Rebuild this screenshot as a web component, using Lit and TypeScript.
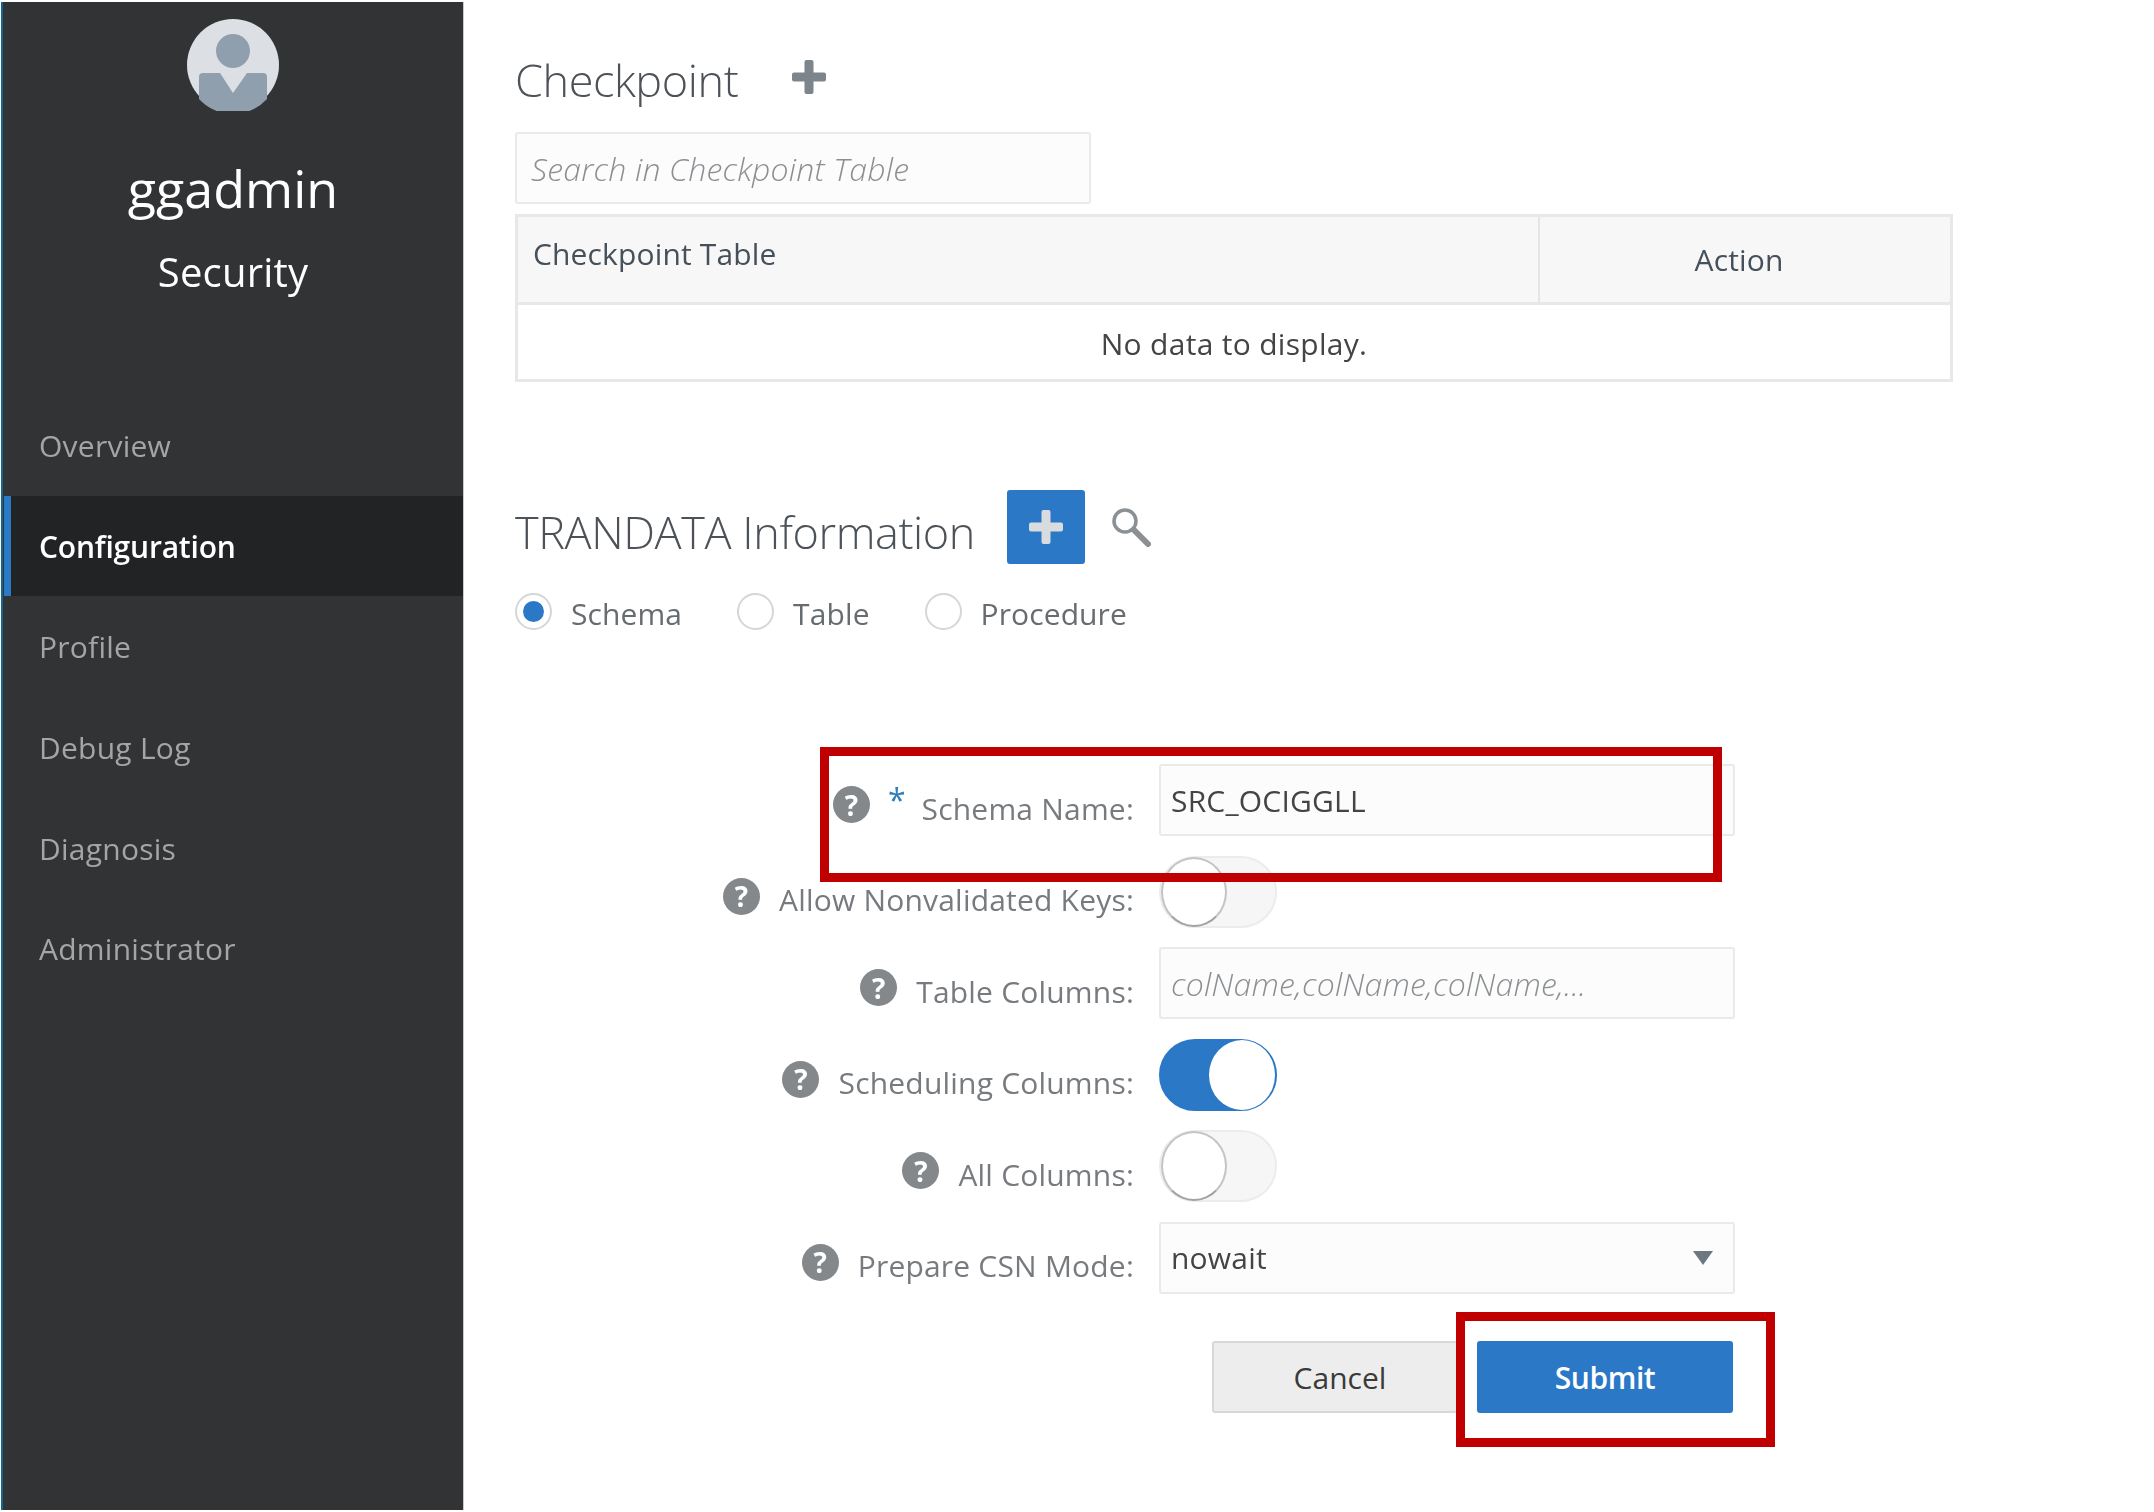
import { LitElement, html, css } from "lit";
import { customElement } from "lit/decorators.js";

const plus = html`<svg viewBox="0 0 38 38" width="38" height="38" fill="currentColor"><rect x="14.5" y="2" width="9" height="34" rx="2"/><rect x="2" y="14.5" width="34" height="9" rx="2"/></svg>`;

@customElement("app-root")
export class AppRoot extends LitElement {
  static styles = css`
    :host { display: block; width: 2154px; height: 1512px; background: #fff; font-family: "Open Sans", "Noto Sans", sans-serif; position: relative; overflow: hidden; }
    .page { display: flex; height: 1512px; filter: blur(0.5px); }
    .side { width: 460px; margin: 2px 0 2px 1px; border-left: 2px solid #12658f; border-right: 1px solid #c9cacb; background: #323335; flex: none; box-sizing: content-box; display: flex; flex-direction: column; align-items: stretch; }
    .avatar { align-self: center; margin: 17px 0 0; width: 92px; height: 92px; display: block; }
    .user { text-align: center; color: #fff; font-size: 52px; line-height: 64px; margin-top: 45px; }
    .role { text-align: center; color: #fff; font-size: 40px; line-height: 54px; margin-top: 25px; letter-spacing: 0.2px; }
    nav { margin-top: 96px; padding-left: 1px; display: flex; flex-direction: column; }
    .item { height: 100.7px; display: flex; align-items: center; padding-left: 28px; border-left: 7px solid transparent; color: #a3a5a6; font-size: 30px; letter-spacing: 0.25px; }
    .item.on { background: #222325; border-left-color: #2a7ac8; color: #fff; font-weight: 600; letter-spacing: -0.2px; }
    main { flex: 1; padding: 0 0 0 51px; min-width: 0; display: flex; flex-direction: column; align-items: flex-start; }
    .head { display: flex; align-items: center; height: 70px; margin-top: 42px; }
    h2 { margin: 6px 0 0; font-weight: 300; color: #4c5257; font-size: 45px; letter-spacing: -0.4px; line-height: 60px; }
    .plain-plus { color: #7d858c; margin-left: 52px; display: flex; }
    .input { box-sizing: border-box; border: 2px solid #e9eaea; border-radius: 3px; background: #fcfcfc; display: flex; align-items: center; color: #444; font-size: 30px; letter-spacing: 0.2px; }
    .ph { color: #8c8f92; font-style: italic; font-weight: 300; font-size: 32px; letter-spacing: 0.2px; }
    .search { width: 576px; height: 72px; margin-top: 20px; padding: 0 0 0 14px; }
    table { width: 1438px; height: 168px; margin-top: 10px; border: 3px solid #e7e9e9; border-collapse: separate; border-spacing: 0; box-sizing: border-box; table-layout: fixed; font-size: 30px; letter-spacing: 0.15px; color: #46505a; }
    th { background: #f7f7f7; font-weight: 400; height: 85px; border-bottom: 3px solid #e7e9e9; padding: 0; }
    th.a { text-align: left; vertical-align: top; height: 69px; padding: 16px 0 0 15px; border-right: 2px solid #e4e6e6; }
    th.b { width: 398px; padding-right: 12px; }
    td { text-align: center; padding: 3px 0 0; color: #444; letter-spacing: 0.3px; }
    .tran { margin-top: 108px; height: 74px; }
    .tran h2 { margin-top: 9px; }
    .add { margin-left: 32px; width: 78px; height: 74px; border-radius: 3px; background: #2a78c6; color: #d8dcdf; display: flex; align-items: center; justify-content: center; }
    .mag { margin-left: 26px; display: block; }
    .radios { display: flex; align-items: center; height: 37px; margin-top: 29px; color: #666c70; font-size: 30px; letter-spacing: 0.1px; }
    .radio { width: 37px; height: 37px; border-radius: 50%; border: 2px solid #d4d6d8; box-sizing: border-box; background: #fff; display: flex; align-items: center; justify-content: center; flex: none; }
    .radio i { width: 21px; height: 21px; border-radius: 50%; background: #2a78c6; display: block; }
    .radios span { margin-left: 19px; padding-top: 4px; }
    .r1 { margin-left: 55px; }
    .r2 { margin-left: 55px; }
    form { margin: 134px 0 0; display: grid; grid-template-columns: 619px 576px; column-gap: 25px; }
    .lab { display: flex; justify-content: flex-end; align-items: center; padding-bottom: 10px; color: #777b7f; font-size: 30px; letter-spacing: 0.2px; }
    .lab span { padding-top: 7px; }
    .help { width: 37px; height: 37px; border-radius: 50%; background: #85888b; color: #fff; font-weight: 700; font-size: 28px; display: flex; align-items: center; justify-content: center; margin-right: 19px; letter-spacing: 0; flex: none; }
    .star { color: #2f7fb8; font-size: 32px; font-weight: 400; margin-right: 16px; margin-left: -1px; margin-top: -10px; letter-spacing: 0; line-height: 1; }
    .ctl { height: 72px; margin-bottom: 19.5px; display: flex; align-items: center; }
    .ctl .input { width: 100%; height: 100%; padding-left: 10px; }
    .sel { justify-content: space-between; padding-right: 20px; }
    .sel svg { display: block; }
    .tog { width: 118px; height: 72px; border-radius: 36px; border: 2px solid #ececec; background: #f6f6f6; box-sizing: border-box; display: flex; align-items: center; }
    .tog i { width: 66px; height: 70px; border-radius: 50%; background: #fff; border: 2px solid #c4c4c4; border-bottom-color: #a2a2a2; box-sizing: border-box; display: block; }
    .tog.on { background: #2a78c6; border-color: #2a78c6; justify-content: flex-end; }
    .tog.on i { border-color: #fff; }
    .btns { margin: 28px 0 0 697px; display: flex; gap: 19px; font-size: 30px; }
    .btn { height: 72px; display: flex; align-items: center; justify-content: center; box-sizing: border-box; border-radius: 3px; }
    .cancel { width: 246px; padding-left: 10px; background: #ededed; border: 2px solid #d8d8d8; color: #3a3a3a; }
    .submit { width: 256px; background: #2a78c6; color: #fff; font-weight: 600; letter-spacing: -0.4px; }
    .red { position: absolute; border: 9px solid #c00000; box-sizing: border-box; }
    .red.a { left: 820px; top: 747px; width: 902px; height: 135px; }
    .red.b { left: 1456px; top: 1312px; width: 319px; height: 135px; }
  `;

  private help() { return html`<b class="help">?</b>`; }

  render() {
    const nav = ["Overview", "Configuration", "Profile", "Debug Log", "Diagnosis", "Administrator"];
    return html`
      <div class="page">
        <aside class="side">
          <svg class="avatar" viewBox="0 0 92 92">
            <circle cx="46" cy="46" r="46" fill="#dce0e4"/>
            <circle cx="46" cy="32" r="17" fill="#909fad"/>
            <path d="M12 58Q12 54 16 54H33L46 74 60 54H76Q80 54 80 58V80A46 46 0 0 1 12 80Z" fill="#909fad"/>
          </svg>
          <div class="user">ggadmin</div>
          <div class="role">Security</div>
          <nav>${nav.map((n) => html`<div class="item ${n === "Configuration" ? "on" : ""}">${n}</div>`)}</nav>
        </aside>
        <main>
          <div class="head"><h2>Checkpoint</h2><span class="plain-plus">${plus}</span></div>
          <div class="input search"><span class="ph">Search in Checkpoint Table</span></div>
          <table>
            <thead><tr><th class="a">Checkpoint Table</th><th class="b">Action</th></tr></thead>
            <tbody><tr><td colspan="2">No data to display.</td></tr></tbody>
          </table>
          <div class="head tran">
            <h2>TRANDATA Information</h2>
            <span class="add">${plus}</span>
            <svg class="mag" width="40" height="40" viewBox="0 0 40 40"><circle cx="14" cy="14" r="11" fill="none" stroke="#8b9094" stroke-width="3.5"/><path d="M23 23l14 14" stroke="#8b9094" stroke-width="6" stroke-linecap="round"/></svg>
          </div>
          <div class="radios">
            <div class="radio"><i></i></div><span>Schema</span>
            <div class="radio r1"></div><span>Table</span>
            <div class="radio r2"></div><span>Procedure</span>
          </div>
          <form>
            <div class="lab">${this.help()}<b class="star">*</b><span>Schema Name:</span></div>
            <div class="ctl"><div class="input">SRC_OCIGGLL</div></div>
            <div class="lab">${this.help()}<span>Allow Nonvalidated Keys:</span></div>
            <div class="ctl"><div class="tog"><i></i></div></div>
            <div class="lab">${this.help()}<span>Table Columns:</span></div>
            <div class="ctl"><div class="input"><span class="ph">colName,colName,colName,...</span></div></div>
            <div class="lab">${this.help()}<span>Scheduling Columns:</span></div>
            <div class="ctl"><div class="tog on"><i></i></div></div>
            <div class="lab">${this.help()}<span>All Columns:</span></div>
            <div class="ctl"><div class="tog"><i></i></div></div>
            <div class="lab">${this.help()}<span>Prepare CSN Mode:</span></div>
            <div class="ctl"><div class="input sel">nowait<svg width="20" height="14" viewBox="0 0 20 14"><path d="M0 0h20L10 14z" fill="#6d7780"/></svg></div></div>
          </form>
          <div class="btns"><div class="btn cancel">Cancel</div><div class="btn submit">Submit</div></div>
        </main>
      </div>
      <div class="red a"></div>
      <div class="red b"></div>
    `;
  }
}
